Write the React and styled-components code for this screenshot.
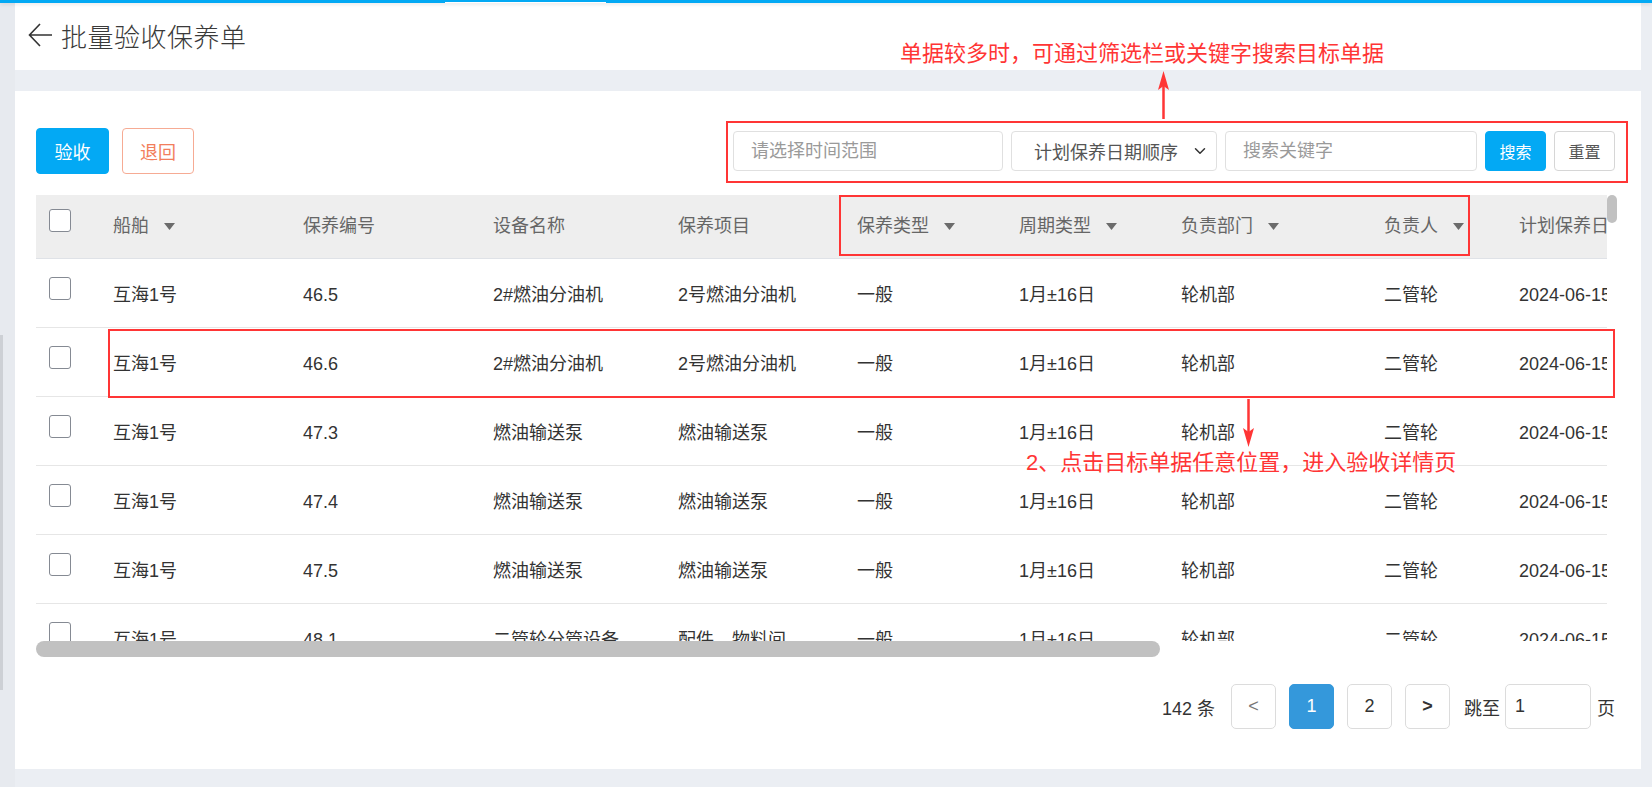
import React from "react";
import styled, { createGlobalStyle } from "styled-components";
import { ChevronDown } from "lucide-react";

const GlobalStyle = createGlobalStyle`
	html, body {
		margin: 0;
		padding: 0;
	}
	body {
		background: #ebeef3;
		font-family: "Liberation Sans", "Noto Sans CJK SC", sans-serif;
		color: #333;
	}
	* {
		box-sizing: border-box;
	}
`;

const Screen = styled.div`
	position: relative;
	width: 1652px;
	height: 787px;
	overflow: hidden;
	background: #ebeef3;
`;

const TopBar = styled.div`
	position: relative;
	z-index: 2;
	height: 3px;
	display: flex;
	align-items: flex-end;
	padding-left: 445px;
	background: #03a9f4;
	box-shadow: 0 1px 4px rgba(0, 0, 0, 0.12);
`;

const TabMark = styled.div`
	width: 161px;
	height: 1px;
	background: #fff;
`;

const Body = styled.div`
	display: flex;
	height: 784px;
`;

const Rail = styled.div`
	flex: none;
	width: 15px;
	padding-top: 332px;
	background: #e7eaef;
`;

const RailMark = styled.div`
	width: 3px;
	height: 355px;
	background: #cdd0d5;
`;

const Content = styled.div`
	flex: 1;
	display: flex;
	flex-direction: column;
	gap: 21px;
	padding-right: 11px;
`;

const HeaderCard = styled.div`
	height: 67px;
	display: flex;
	align-items: center;
	gap: 8px;
	padding: 0 0 3px 12px;
	background: #fff;
`;

const Title = styled.h1`
	margin: 0;
	font-size: 26px;
	font-weight: 300;
	color: #3a3a3a;
	letter-spacing: 0.5px;
`;

const MainCard = styled.div`
	height: 678px;
	display: flex;
	flex-direction: column;
	padding: 37px 24px 0 21px;
	background: #fff;
`;

const Toolbar = styled.div`
	height: 46px;
	display: flex;
	align-items: center;
	justify-content: space-between;
	padding-right: 2px;
`;

const Group = styled.div`
	display: flex;
	align-items: center;
	gap: ${props => props.gap || 8}px;
`;

const Button = styled.button`
	height: ${props => props.h || 46}px;
	width: ${props => props.w || 73}px;
	border-radius: 4px;
	font-family: inherit;
	font-size: ${props => props.fs || 18}px;
	cursor: pointer;
	padding: 0;
	border: 1px solid ${props => props.variant === "primary" ? "#03a9f4" : props.variant === "danger" ? "#f6ab94" : "#d6d6d6"};
	background: ${props => props.variant === "primary" ? "#03a9f4" : "#fff"};
	color: ${props => props.variant === "primary" ? "#fff" : props.variant === "danger" ? "#f27e5c" : "#555"};
`;

const Input = styled.input`
	width: ${props => props.w}px;
	height: 40px;
	padding: 0 0 0 17px;
	border: 1px solid #e0e0e0;
	border-radius: 4px;
	font-family: inherit;
	font-size: 18px;
	color: #333;
	outline: none;

	&::placeholder {
		color: #9a9a9a;
	}
`;

const Select = styled.div`
	width: 206px;
	height: 40px;
	display: flex;
	align-items: center;
	justify-content: space-between;
	padding: 0 7px 0 22px;
	border: 1px solid #e0e0e0;
	border-radius: 4px;
	font-size: 18px;
	color: #555;
`;

/* table with its own drawn scrollbars */
const TableArea = styled.div`
	margin-top: 21px;
	width: 1581px;
	display: flex;
	flex-direction: column;
`;

const TableTop = styled.div`
	display: flex;
	height: 446px;
`;

const Viewport = styled.div`
	width: 1571px;
	height: 446px;
	overflow: hidden;
`;

const VTrack = styled.div`
	width: 10px;
	background: #fff;
`;

const VThumb = styled.div`
	height: 28px;
	border-radius: 5px;
	background: #c1c1c1;
`;

const HTrack = styled.div`
	width: 1571px;
	height: 16px;
	background: #fff;
`;

const HThumb = styled.div`
	width: 1124px;
	height: 16px;
	border-radius: 8px;
	background: #c1c1c1;
`;

const Table = styled.div`
	width: 2197px;
`;

const COLS = "59px 190px 190px 185px 179px 162px 162px 203px 135px 200px 200px 160px 172px";

const HeadRow = styled.div`
	height: 64px;
	display: grid;
	grid-template-columns: ${COLS};
	align-items: start;
	background: #eeeeee;
	border-bottom: 1px solid #dfe2e7;
`;

const Row = styled.div`
	height: 69px;
	display: grid;
	grid-template-columns: ${COLS};
	align-items: start;
	border-bottom: 1px solid #e6e6e6;
`;

const Cell = styled.div`
	padding: ${props => props.head ? 19 : 24}px 0 0 18px;
	line-height: 24px;
	font-size: 18px;
	white-space: nowrap;
	overflow: hidden;
	color: ${props => props.head ? "#666" : "#333"};
	display: flex;
	align-items: center;
	gap: 15px;
`;

const CheckCell = styled.div`
	padding: ${props => props.head ? 14 : 18}px 0 0 12.5px;
`;

const Check = styled.span`
	display: block;
	width: 22px;
	height: 23px;
	border: 1px solid #858a93;
	border-radius: 3px;
	background: #fff;
`;

const Pager = styled.div`
	margin-top: 27px;
	display: flex;
	align-items: center;
	justify-content: flex-end;
	padding-right: 2px;
	font-size: 18px;
	color: #333;
`;

const PageBtn = styled.div`
	width: 45px;
	height: 45px;
	margin-left: ${props => props.ml || 13}px;
	display: flex;
	align-items: center;
	justify-content: center;
	border-radius: 5px;
	border: 1px solid ${props => props.active ? "#3498db" : "#dcdcdc"};
	background: ${props => props.active ? "#3498db" : "#fff"};
	color: ${props => props.active ? "#fff" : props.muted ? "#777" : "#333"};
	font-weight: ${props => props.bold ? 700 : 400};
`;

const PagerText = styled.span`
	margin-left: ${props => props.ml || 0}px;
`;

const JumpInput = styled.input`
	width: 86px;
	height: 45px;
	margin: 0 6px 0 5px;
	padding-left: 9px;
	border: 1px solid #dcdcdc;
	border-radius: 5px;
	font-family: inherit;
	font-size: 18px;
	color: #333;
	outline: none;
`;

/* annotations drawn over the screenshot */
const Note = styled.div`
	position: absolute;
	left: ${props => props.x}px;
	top: ${props => props.y}px;
	font-size: ${props => props.fs}px;
	line-height: 1;
	color: #ff3535;
	white-space: nowrap;
	z-index: 5;
`;

const Frame = styled.div`
	position: absolute;
	left: ${props => props.x}px;
	top: ${props => props.y}px;
	width: ${props => props.w}px;
	height: ${props => props.h}px;
	border: 2px solid #ff3535;
	z-index: 5;
	pointer-events: none;
`;

const ArrowSvg = styled.svg`
	position: absolute;
	left: ${props => props.x}px;
	top: ${props => props.y}px;
	z-index: 5;
`;

const SortIcon = () => (
	<svg width="11" height="7" viewBox="0 0 11 7">
		<path d="M0 0 L11 0 L5.5 7 Z" fill="#6b6b6b" />
	</svg>
);

const BackIcon = () => (
	<svg width="26" height="26" viewBox="0 0 26 26">
		<path d="M25 13 H3 M13 2 L2.5 13 L13 24" fill="none" stroke="#333" strokeWidth="1.6" />
	</svg>
);

const headers = [
	{ t: "船舶", sort: true },
	{ t: "保养编号" },
	{ t: "设备名称" },
	{ t: "保养项目" },
	{ t: "保养类型", sort: true },
	{ t: "周期类型", sort: true },
	{ t: "负责部门", sort: true },
	{ t: "负责人", sort: true },
	{ t: "计划保养日期" },
	{ t: "上次保养日期" },
	{ t: "保养状态" },
	{ t: "备注" },
];

const rows = [
	["46.5", "2#燃油分油机", "2号燃油分油机"],
	["46.6", "2#燃油分油机", "2号燃油分油机"],
	["47.3", "燃油输送泵", "燃油输送泵"],
	["47.4", "燃油输送泵", "燃油输送泵"],
	["47.5", "燃油输送泵", "燃油输送泵"],
	["48.1", "二管轮分管设备", "配件、物料间"],
	["48.2", "二管轮分管设备", "工具间"],
];

const App = () => {
	return (
		<>
			<GlobalStyle />
			<Screen>
				<TopBar>
					<TabMark />
				</TopBar>
				<Body>
					<Rail>
						<RailMark />
					</Rail>
					<Content>
						<HeaderCard>
							<BackIcon />
							<Title>批量验收保养单</Title>
						</HeaderCard>

						<MainCard>
							<Toolbar>
								<Group gap={13}>
									<Button variant="primary">验收</Button>
									<Button variant="danger" w={72}>退回</Button>
								</Group>
								<Group gap={8}>
									<Input w={270} placeholder="请选择时间范围" />
									<Select>
										<span>计划保养日期顺序</span>
										<ChevronDown size={18} strokeWidth={2} color="#333" />
									</Select>
									<Input w={252} placeholder="搜索关键字" />
									<Button variant="primary" w={61} h={40} fs={16}>搜索</Button>
									<Button w={61} h={40} fs={16}>重置</Button>
								</Group>
							</Toolbar>

							<TableArea>
								<TableTop>
									<Viewport>
										<Table>
											<HeadRow>
												<CheckCell head>
													<Check />
												</CheckCell>
												{headers.map(h => (
													<Cell head key={h.t}>
														{h.t}
														{h.sort && <SortIcon />}
													</Cell>
												))}
											</HeadRow>
											{rows.map((r, i) => (
												<Row key={i}>
													<CheckCell>
														<Check />
													</CheckCell>
													<Cell>互海1号</Cell>
													<Cell>{r[0]}</Cell>
													<Cell>{r[1]}</Cell>
													<Cell>{r[2]}</Cell>
													<Cell>一般</Cell>
													<Cell>1月±16日</Cell>
													<Cell>轮机部</Cell>
													<Cell>二管轮</Cell>
													<Cell>2024-06-15</Cell>
													<Cell>2024-05-30</Cell>
													<Cell>待验收</Cell>
													<Cell></Cell>
												</Row>
											))}
										</Table>
									</Viewport>
									<VTrack>
										<VThumb />
									</VTrack>
								</TableTop>
								<HTrack>
									<HThumb />
								</HTrack>
							</TableArea>

							<Pager>
								<PagerText>142 条</PagerText>
								<PageBtn muted ml={16}>&lt;</PageBtn>
								<PageBtn active>1</PageBtn>
								<PageBtn>2</PageBtn>
								<PageBtn bold>&gt;</PageBtn>
								<PagerText ml={14}>跳至</PagerText>
								<JumpInput defaultValue="1" />
								<PagerText>页</PagerText>
							</Pager>
						</MainCard>
					</Content>
				</Body>

				<Note x={900} y={43} fs={22}>单据较多时，可通过筛选栏或关键字搜索目标单据</Note>
				<ArrowSvg x={1155} y={71} width="17" height="48" viewBox="0 0 17 48">
					<path d="M8.5 15 V48" stroke="#ff3535" strokeWidth="2.5" />
					<path d="M8.5 0 L14 19 L8.5 15 L3 19 Z" fill="#ff3535" />
				</ArrowSvg>
				<Frame x={726} y={121} w={902} h={62} />
				<Frame x={839} y={195} w={631} h={61} />
				<Frame x={108} y={329} w={1507} h={69} />
				<ArrowSvg x={1240} y={399} width="17" height="48" viewBox="0 0 17 48">
					<path d="M8.5 0 V33" stroke="#ff3535" strokeWidth="2.5" />
					<path d="M8.5 48 L14 29 L8.5 33 L3 29 Z" fill="#ff3535" />
				</ArrowSvg>
				<Note x={1026} y={452} fs={22}>2、点击目标单据任意位置，进入验收详情页</Note>
			</Screen>
		</>
	);
};

export default App;
